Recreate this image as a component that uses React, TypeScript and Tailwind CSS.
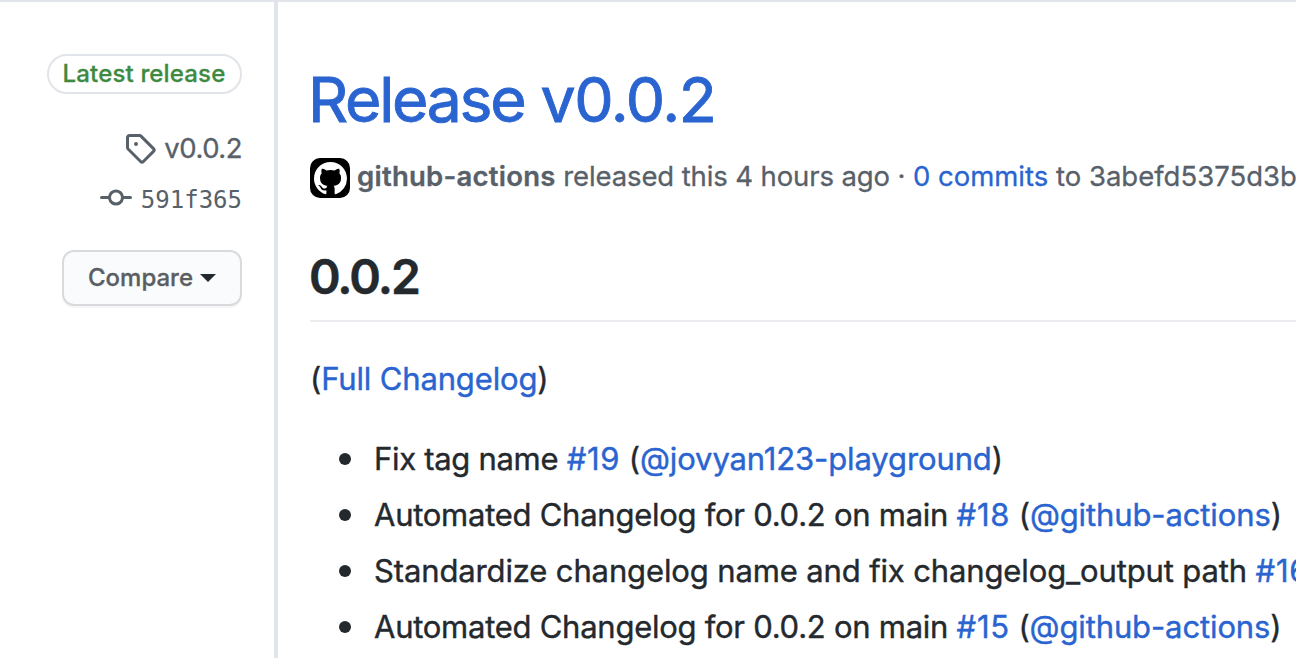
import type { ReactNode } from "react";

function Link({ children, className = "" }: { children: ReactNode; className?: string }) {
  return (
    <a href="#" className={`text-[#2a64d0] ${className}`}>
      {children}
    </a>
  );
}

function TagIcon() {
  return (
    <svg width="32" height="32" viewBox="0 0 16 16" fill="currentColor" fillRule="evenodd" aria-hidden="true">
      <path d="M2.5 7.775V2.75a.25.25 0 01.25-.25h5.025a.25.25 0 01.177.073l6.25 6.25a.25.25 0 010 .354l-5.025 5.025a.25.25 0 01-.354 0l-6.25-6.25a.25.25 0 01-.073-.177zm-1.5 0V2.75C1 1.784 1.784 1 2.75 1h5.025c.464 0 .91.184 1.238.513l6.25 6.25a1.75 1.75 0 010 2.474l-5.026 5.026a1.75 1.75 0 01-2.474 0l-6.25-6.25A1.75 1.75 0 011 7.775zM6 5a1 1 0 100 2 1 1 0 000-2z" />
    </svg>
  );
}

function CommitIcon() {
  return (
    <svg width="32" height="32" viewBox="0 0 16 16" fill="currentColor" fillRule="evenodd" aria-hidden="true">
      <path d="M10.5 7.75a2.5 2.5 0 11-5 0 2.5 2.5 0 015 0zm1.43.75a4.002 4.002 0 01-7.86 0H.75a.75.75 0 110-1.5h3.32a4.001 4.001 0 017.86 0h3.32a.75.75 0 110 1.5h-3.32z" />
    </svg>
  );
}

function Avatar() {
  return (
    <span className="flex size-10 shrink-0 items-center justify-center rounded-[10px] bg-black text-white">
      <svg width="33" height="33" viewBox="0 0 16 16" fill="currentColor" fillRule="evenodd" aria-hidden="true">
        <path d="M8 0C3.58 0 0 3.58 0 8c0 3.54 2.29 6.53 5.47 7.59.4.07.55-.17.55-.38 0-.19-.01-.82-.01-1.49-2.01.37-2.53-.49-2.69-.94-.09-.23-.48-.94-.82-1.13-.28-.15-.68-.52-.01-.53.63-.01 1.08.58 1.23.82.72 1.21 1.87.87 2.33.66.07-.52.28-.87.51-1.07-1.78-.2-3.64-.89-3.64-3.95 0-.87.31-1.59.82-2.15-.08-.2-.36-1.02.08-2.12 0 0 .67-.21 2.2.82.64-.18 1.32-.27 2-.27.68 0 1.36.09 2 .27 1.53-1.04 2.2-.82 2.2-.82.44 1.1.16 1.92.08 2.12.51.56.82 1.27.82 2.15 0 3.07-1.87 3.75-3.65 3.95.29.25.54.73.54 1.48 0 1.07-.01 1.93-.01 2.2 0 .21.15.46.55.38A8.013 8.013 0 0016 8c0-4.42-3.58-8-8-8z" />
      </svg>
    </span>
  );
}

type Change = { text: string; issue: string; author?: string; tracking: string };

const changes: Change[] = [
  { text: "Fix tag name", issue: "#19", author: "@jovyan123-playground", tracking: "tracking-[-0.3px]" },
  { text: "Automated Changelog for 0.0.2 on main", issue: "#18", author: "@github-actions", tracking: "tracking-[-0.26px]" },
  { text: "Standardize changelog name and fix changelog_output path", issue: "#16", tracking: "tracking-[-0.13px]" },
  { text: "Automated Changelog for 0.0.2 on main", issue: "#15", author: "@github-actions", tracking: "tracking-[-0.26px]" },
];

function Sidebar() {
  return (
    <aside className="flex w-[278px] shrink-0 flex-col items-end border-r-4 border-[#e1e4e8] pt-[52px] pr-8 text-[#586069]">
      <span className="flex h-10 w-[195px] items-center justify-center rounded-full border-2 border-[#e1e4e8] pr-px text-2xl font-medium tracking-[0.15px] text-[#3f8a41] [-webkit-text-stroke:0.3px]">
        Latest release
      </span>
      <div className="mt-[38px] flex h-8 items-center gap-2 text-[27.5px] [-webkit-text-stroke:0.3px]">
        <TagIcon />
        <span className="pt-px tracking-[-0.5px]">v0.0.2</span>
      </div>
      <div className="mt-[18px] flex h-8 items-center gap-[9px] font-['DejaVu_Sans_Mono',monospace] text-2xl">
        <CommitIcon />
        <span className="pt-1">591f365</span>
      </div>
      <button className="mt-9 flex h-14 w-[180px] items-center justify-center gap-[7px] rounded-xl border-2 border-[#d8dadd] bg-[#fafbfc] text-2xl font-medium text-[#5a5e62] shadow-[0_2px_0_rgba(27,31,35,0.04)]">
        <span className="[-webkit-text-stroke:0.3px]">Compare</span>
        <span className="border-x-8 border-t-8 border-x-transparent border-t-[#24292e]" />
      </button>
    </aside>
  );
}

export default function App() {
  return (
    <div className="flex h-[658px] w-[1296px] overflow-hidden border-t-2 border-[#e1e4e8] bg-white font-['Inter',sans-serif] whitespace-nowrap text-[#24292e]">
      <Sidebar />
      <main className="min-w-0 flex-1 overflow-hidden pt-[57px] pl-8">
        <h1 className="-ml-[2px] h-[81px] text-[62.5px] leading-[80px] [-webkit-text-stroke:0.9px]">
          <Link>
            <span className="tracking-[-2.3px]">Release</span>
            <span className="tracking-[-1.4px]"> v0.0.2</span>
          </Link>
        </h1>
        <div className="mt-[18px] flex h-10 items-center gap-[7px] text-[27.5px] text-[#586069] [-webkit-text-stroke:0.3px]">
          <Avatar />
          <p className="-mt-[2px]">
            <span className="font-semibold tracking-[0.25px]">github-actions</span>
            <span className="tracking-[-0.12px]"> released this 4 hours ago · </span>
            <Link>0 commits</Link> to 3abefd5375d3b
          </p>
        </div>
        <h2 className="mt-[46px] h-[78px] border-b-2 border-[#eaecef] pt-[3px] text-[48px] leading-[60px] font-semibold tracking-[-2px] [-webkit-text-stroke:0.5px]">
          <span className="-ml-px">0.0.2</span>
        </h2>
        <p className="mt-[33px] h-12 text-[31px] leading-[48px] tracking-[-0.15px] [-webkit-text-stroke:0.4px]">
          (<Link>Full Changelog</Link>)
        </p>
        <ul className="mt-8 flex flex-col gap-2 text-[31px] leading-[48px] [-webkit-text-stroke:0.4px]">
          {changes.map((change, index) => (
            <li key={index} className="flex h-12 items-center">
              <span className="mr-[23.5px] ml-[28.5px] size-3 shrink-0 rounded-full bg-[#24292e]" />
              <span>
                <span className={change.tracking}>{change.text} </span>
                <Link className="tracking-[0.7px]">{change.issue}</Link>
                {change.author && (
                  <span className="tracking-[-0.12px]">
                    {" "}
                    (<Link>{change.author}</Link>)
                  </span>
                )}
              </span>
            </li>
          ))}
        </ul>
      </main>
    </div>
  );
}
